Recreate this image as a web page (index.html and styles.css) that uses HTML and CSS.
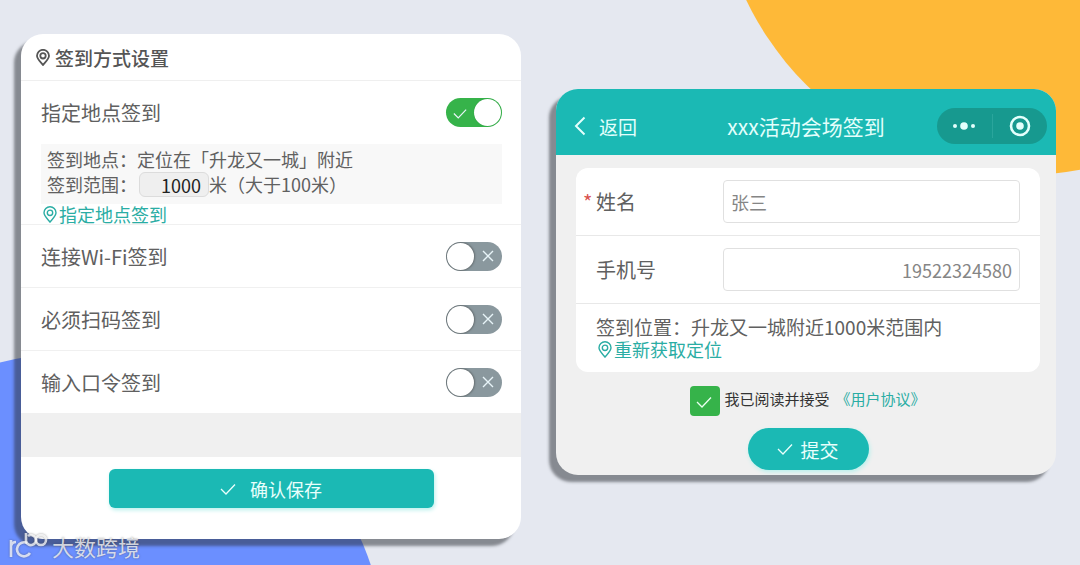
FILE: index.html
```html
<!DOCTYPE html>
<html lang="zh-CN">
<head>
    <meta charset="UTF-8">
    <meta name="viewport" content="width=device-width, initial-scale=1.0">
    <title>签到方式设置</title>
    <link rel="stylesheet" href="styles.css">
</head>
<body>
    <!-- Shared icons -->
    <svg class="sprite" aria-hidden="true">
        <symbol id="pin" viewBox="0 0 14 17">
            <path d="M7 16C5.2 13.6 1 10.2 1 6.8a6 6 0 0 1 12 0C13 10.2 8.800 13.600 7 16z"/>
            <circle cx="7" cy="6.800" r="2.700"/>
        </symbol>
        <symbol id="check" viewBox="0 0 16 12">
            <path d="M1 6l5 5 9-9.500"/>
        </symbol>
        <symbol id="cross" viewBox="0 0 12 12">
            <path d="M1 1l10 10M11 1L1 11"/>
        </symbol>
    </svg>

    <div class="page">
        <div class="circle orange"></div>
        <div class="circle blue"></div>

        <form class="card settings">
            <h1 class="settings-title"><svg class="pin"><use href="#pin"/></svg>签到方式设置</h1>

            <div class="option place">
                <label class="row">
                    指定地点签到
                    <span class="switch">
                        <input type="checkbox" checked>
                        <svg class="mark-on"><use href="#check"/></svg>
                    </span>
                </label>
                <div class="detail">
                    <div>签到地点：定位在「升龙又一城」附近</div>
                    <div class="range">
                        <label for="range">签到范围：</label>
                        <input id="range" type="text" value="1000">
                        <span>米（大于100米）</span>
                    </div>
                </div>
                <a class="pin-link" href="#"><svg class="pin"><use href="#pin"/></svg>指定地点签到</a>
            </div>
            <label class="option row">
                连接Wi-Fi签到
                <span class="switch">
                    <input type="checkbox">
                    <svg class="mark-off"><use href="#cross"/></svg>
                </span>
            </label>
            <label class="option row">
                必须扫码签到
                <span class="switch">
                    <input type="checkbox">
                    <svg class="mark-off"><use href="#cross"/></svg>
                </span>
            </label>
            <label class="option row">
                输入口令签到
                <span class="switch">
                    <input type="checkbox">
                    <svg class="mark-off"><use href="#cross"/></svg>
                </span>
            </label>

            <div class="spacer"></div>
            <div class="settings-footer">
                <button class="btn save" type="button"><svg class="check"><use href="#check"/></svg>确认保存</button>
            </div>
        </form>

        <div class="card signin">
            <header class="navbar">
                <button class="back" type="button">
                    <svg viewBox="0 0 12 20"><path d="M10.500 1.500L2 10l8.500 8.500"/></svg>返回
                </button>
                <h2>xxx活动会场签到</h2>
                <div class="capsule">
                    <button type="button" aria-label="更多">
                        <svg viewBox="0 0 24 24"><circle cx="3" cy="12" r="2"/><circle cx="12" cy="12" r="3.800"/><circle cx="21" cy="12" r="2"/></svg>
                    </button>
                    <button type="button" aria-label="关闭">
                        <svg viewBox="0 0 24 24"><circle class="ring" cx="12" cy="12" r="9"/><circle cx="12" cy="12" r="3.800"/></svg>
                    </button>
                </div>
            </header>

            <form class="signin-body">
                <div class="fields">
                    <div class="field">
                        <label class="required" for="name">姓名</label>
                        <input id="name" type="text" value="张三">
                    </div>
                    <div class="field">
                        <label for="phone">手机号</label>
                        <input id="phone" class="right" type="tel" value="19522324580">
                    </div>
                    <div class="location">
                        <div class="location-text">签到位置：升龙又一城附近1000米范围内</div>
                        <a class="pin-link" href="#"><svg class="pin"><use href="#pin"/></svg>重新获取定位</a>
                    </div>
                </div>
                <div class="agree">
                    <label>
                        <span class="tick">
                            <input type="checkbox" checked>
                            <svg class="check"><use href="#check"/></svg>
                        </span>
                        我已阅读并接受
                    </label>
                    <a href="#">《用户协议》</a>
                </div>
                <button class="btn submit" type="button"><svg class="check"><use href="#check"/></svg>提交</button>
            </form>
        </div>

        <div class="watermark">
            <svg viewBox="0 0 40 28">
                <path d="M3 8v17M3 14q1-4 5-4M22 21a7 7 0 1 1-3-10"/>
                <path d="M18 1v8a5 5 0 1 0 2-5"/>
                <circle cx="33" cy="8" r="5"/>
            </svg>
            大数跨境
        </div>
    </div>
</body>
</html>
```
FILE: styles.css
```css
* {
    box-sizing: border-box;
}

body {
    margin: 0;
    background-color: #e5e8f0;
    font-family: "Noto Sans CJK SC", sans-serif;
    font-size: 18px;
    color: #606060;
}

h1,
h2 {
    margin: 0;
}

a {
    color: #2aada4;
    text-decoration: none;
}

input,
button {
    margin: 0;
    font-family: inherit;
    color: inherit;
}

button {
    border: none;
    padding: 0;
    cursor: pointer;
}

svg {
    fill: none;
    stroke: currentColor;
    flex-shrink: 0;
}

.sprite {
    display: none;
}

.page {
    position: relative;
    overflow: hidden;
    min-height: 100vh;
    display: grid;
    grid-template-columns: 1fr 1fr;
    gap: 35px;
    align-items: start;
    padding: 34px 24px 26px 21px;
}

/* Background shapes */
.circle {
    position: absolute;
    border-radius: 50%;
}

.orange {
    width: 616px;
    height: 616px;
    top: -441px;
    right: -252px;
    background-color: #feb938;
}

.blue {
    width: 622px;
    height: 622px;
    left: -235px;
    bottom: -410px;
    background-color: #6b8fff;
}

.card {
    position: relative;
    border-radius: 22px;
    box-shadow: -7px 7px 3px rgba(40, 44, 50, 0.5);
}

/* Settings card */
.settings {
    background-color: #fff;
}

.settings-title {
    display: flex;
    align-items: center;
    gap: 5px;
    height: 47px;
    padding-left: 15px;
    border-bottom: 1px solid #efefef;
    font-size: 19px;
    font-weight: 500;
    color: #555;
}

.pin {
    width: 14px;
    height: 17px;
    stroke-width: 1.4;
}

.settings-title .pin {
    stroke-width: 1.8;
}

.option {
    border-bottom: 1px solid #f0f0f0;
}

.row {
    display: flex;
    align-items: center;
    justify-content: space-between;
    height: 63px;
    padding: 0 19px 0 20px;
    font-size: 20px;
}

.detail {
    margin: 0 19px 0 20px;
    padding: 3px 6px 7px;
    background-color: #f8f8f8;
    line-height: 25px;
}

.range {
    display: flex;
}

.range input {
    width: 70px;
    height: 25px;
    margin-left: 2px;
    padding: 0 7px;
    border: 1px solid #dcdcdc;
    border-radius: 6px;
    background-color: #efefef;
    font-size: 18px;
    text-align: right;
    color: #222;
}

.pin-link {
    display: flex;
    align-items: center;
    gap: 2px;
    line-height: 22px;
}

.place .pin-link {
    padding-left: 22px;
    line-height: 20px;
}

.switch {
    position: relative;
    display: flex;
    color: #e8f4f8;
}

.switch input {
    appearance: none;
    width: 56px;
    height: 29px;
    padding: 1px;
    border-radius: 15px;
    background-color: #8a989e;
    overflow: hidden;
}

.switch input::before {
    content: "";
    display: block;
    width: 27px;
    height: 27px;
    border-radius: 50%;
    background-color: #fff;
    box-shadow: 0 0 2px 1px #656d70;
}

.switch input:checked {
    background-color: #36b34a;
}

.switch input:checked::before {
    margin-left: auto;
    box-shadow: 0 0 1px #218a35;
}

.mark-on,
.mark-off {
    position: absolute;
    stroke-width: 1.4;
    pointer-events: none;
}

.mark-on {
    left: 7px;
    top: 10px;
    width: 14px;
    height: 11px;
}

.mark-off {
    right: 8px;
    top: 8px;
    width: 12px;
    height: 12px;
}

.spacer {
    height: 43px;
    background-color: #f0f0f0;
}

.settings-footer {
    display: flex;
    justify-content: center;
    padding: 12px 0 31px;
}

.btn {
    display: flex;
    align-items: center;
    justify-content: center;
    background-color: #1bb9b4;
    box-shadow: 1px 2px 4px #b8f0ec;
    color: #e9fffc;
}

.check {
    width: 16px;
    height: 12px;
    stroke-width: 1.3;
}

.save {
    width: 65%;
    height: 39px;
    gap: 14px;
    border-radius: 6px;
    font-size: 18px;
}

/* Sign-in card */
.signin {
    margin-top: 55px;
    overflow: hidden;
    background-color: #f0f0f0;
}

.navbar {
    display: grid;
    grid-template-columns: 1fr auto 1fr;
    align-items: center;
    height: 66px;
    padding: 8px 9px 0;
    background-color: #1bb9b4;
    color: #e3fffc;
}

.navbar h2 {
    font-size: 21px;
    font-weight: 400;
}

.back {
    display: flex;
    align-items: center;
    gap: 13px;
    padding-left: 9px;
    background: none;
    font-size: 19px;
}

.back svg {
    width: 12px;
    height: 20px;
    stroke-width: 2;
}

.capsule {
    justify-self: end;
    display: flex;
    align-items: center;
    width: 110px;
    height: 36px;
    border-radius: 18px;
    background-color: #17998f;
}

.capsule button {
    flex: 1;
    display: flex;
    justify-content: center;
    background: none;
}

.capsule button + button {
    border-left: 1px solid #2aa59c;
}

.capsule svg {
    width: 24px;
    height: 24px;
    fill: currentColor;
    stroke: none;
}

.capsule .ring {
    fill: none;
    stroke: currentColor;
    stroke-width: 2.6;
}

.signin-body {
    display: flex;
    flex-direction: column;
    align-items: center;
    padding: 13px 16px 5px 20px;
}

.fields {
    align-self: stretch;
    border-radius: 12px;
    background-color: #fff;
}

.field {
    display: grid;
    grid-template-columns: 127px 1fr;
    align-items: center;
    padding: 12px 20px;
    border-bottom: 1px solid #e8e8e8;
}

.field label {
    font-size: 20px;
}

.required::before {
    content: "*";
    display: inline-block;
    width: 13px;
    margin-left: -13px;
    font-size: 20px;
    color: #d9534f;
}

.field input {
    width: 100%;
    height: 43px;
    padding: 0 7px;
    border: 1px solid #e0e0e0;
    border-radius: 4px;
    background-color: #fff;
    font-size: 18px;
    color: #858585;
}

.field .right {
    text-align: right;
}

.location {
    padding: 12px 20px;
    line-height: 22px;
}

.location-text {
    font-size: 19px;
}

.location .pin-link {
    padding-left: 2px;
}

.agree {
    display: flex;
    gap: 6px;
    margin: 14px 0 12px;
    font-size: 15px;
    line-height: 26px;
}

.agree label {
    display: flex;
    gap: 4px;
    color: #333;
}

.tick {
    position: relative;
    display: flex;
}

.tick input {
    appearance: none;
    width: 30px;
    height: 30px;
    border-radius: 4px;
    background-color: #36b34a;
}

.tick .check {
    position: absolute;
    left: 6px;
    top: 10px;
    color: #e9fff0;
    pointer-events: none;
}

.submit {
    width: 121px;
    height: 42px;
    gap: 7px;
    border-radius: 21px;
    font-size: 19px;
}

.watermark {
    position: absolute;
    left: 8px;
    bottom: 5px;
    display: flex;
    align-items: center;
    gap: 4px;
    font-size: 22px;
    line-height: 28px;
    color: rgba(255, 255, 255, 0.75);
    text-shadow: 0 0 2px rgba(60, 60, 60, 0.6);
}

.watermark svg {
    width: 40px;
    height: 28px;
    stroke-width: 2.6;
    filter: drop-shadow(0 0 1px rgba(60, 60, 60, 0.6));
}
```
